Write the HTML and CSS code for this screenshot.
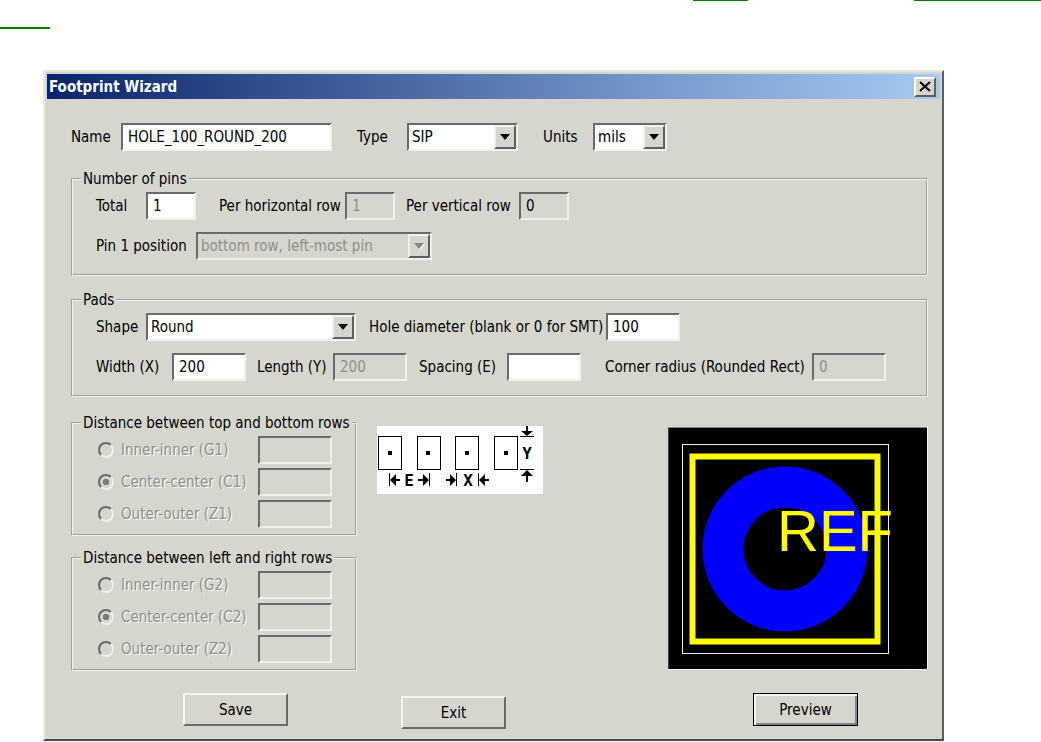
FILE: index.html
```
<!DOCTYPE html>
<html lang="en">
<head>
    <meta charset="UTF-8">
    <meta name="viewport" content="width=device-width, initial-scale=1.0">
    <title>Footprint Wizard</title>
    <link rel="stylesheet" href="styles.css">
</head>
<body>
    <nav class="links">
        <a class="link link-short" href="#part" aria-label="Part"></a>
        <a class="link link-long" href="#footprint" aria-label="Footprint"></a>
        <a class="link link-wrap" href="#footprint" aria-label="Footprint, continued"></a>
    </nav>

    <form class="dialog">
        <div class="title-bar">
            <h1>Footprint Wizard</h1>
            <button type="button" class="close" aria-label="Close">
                <svg width="12" height="11" viewBox="0 0 12 11"><path d="M1 1L11 10M11 1L1 10" stroke="#000" stroke-width="2"/></svg>
            </button>
        </div>

        <div class="content">
            <div class="row row-name">
                <div class="field">
                    <label class="label-50" for="name">Name</label>
                    <input class="input-name" type="text" id="name" value="HOLE_100_ROUND_200">
                </div>
                <div class="field">
                    <label class="label-50" for="type">Type</label>
                    <div class="select select-type">
                        <select id="type"><option>SIP</option></select>
                    </div>
                </div>
                <div class="field">
                    <label class="label-50" for="units">Units</label>
                    <div class="select select-units">
                        <select id="units"><option>mils</option></select>
                    </div>
                </div>
            </div>

            <fieldset class="group">
                <legend>Number of pins</legend>
                <div class="row row-pins">
                    <div class="field">
                        <label class="label-50" for="total">Total</label>
                        <input class="input-small" type="text" id="total" value="1">
                    </div>
                    <div class="field">
                        <label class="label-126" for="per-h">Per horizontal row</label>
                        <input class="input-small" type="text" id="per-h" value="1" disabled>
                    </div>
                    <div class="field">
                        <label class="label-113" for="per-v">Per vertical row</label>
                        <input class="input-small input-readonly" type="text" id="per-v" value="0" readonly>
                    </div>
                </div>
                <div class="row">
                    <div class="field">
                        <label class="label-100" for="pin1">Pin 1 position</label>
                        <div class="select select-pin">
                            <select id="pin1" disabled><option>bottom row, left-most pin</option></select>
                        </div>
                    </div>
                </div>
            </fieldset>

            <fieldset class="group">
                <legend>Pads</legend>
                <div class="row row-shape">
                    <div class="field">
                        <label class="label-50" for="shape">Shape</label>
                        <div class="select select-shape">
                            <select id="shape"><option>Round</option></select>
                        </div>
                    </div>
                    <div class="field">
                        <label class="label-237" for="hole">Hole diameter (blank or 0 for SMT)</label>
                        <input class="input-medium" type="text" id="hole" value="100">
                    </div>
                </div>
                <div class="row row-size">
                    <div class="field">
                        <label class="label-76" for="width">Width (X)</label>
                        <input class="input-medium" type="text" id="width" value="200">
                    </div>
                    <div class="field">
                        <label class="label-76" for="length">Length (Y)</label>
                        <input class="input-medium" type="text" id="length" value="200" disabled>
                    </div>
                    <div class="field">
                        <label class="label-88" for="spacing">Spacing (E)</label>
                        <input class="input-medium" type="text" id="spacing">
                    </div>
                    <div class="field">
                        <label class="label-207" for="radius">Corner radius (Rounded Rect)</label>
                        <input class="input-medium" type="text" id="radius" value="0" disabled>
                    </div>
                </div>
            </fieldset>

            <div class="lower">
                <div class="distances">
                    <fieldset class="group distance">
                        <legend>Distance between top and bottom rows</legend>
                        <div class="option">
                            <input type="radio" name="dist1" id="g1" disabled>
                            <label for="g1">Inner-inner (G1)</label>
                            <input class="input-medium" type="text" aria-label="G1" disabled>
                        </div>
                        <div class="option">
                            <input type="radio" name="dist1" id="c1" checked disabled>
                            <label for="c1">Center-center (C1)</label>
                            <input class="input-medium" type="text" aria-label="C1" disabled>
                        </div>
                        <div class="option">
                            <input type="radio" name="dist1" id="z1" disabled>
                            <label for="z1">Outer-outer (Z1)</label>
                            <input class="input-medium" type="text" aria-label="Z1" disabled>
                        </div>
                    </fieldset>
                    <fieldset class="group distance">
                        <legend>Distance between left and right rows</legend>
                        <div class="option">
                            <input type="radio" name="dist2" id="g2" disabled>
                            <label for="g2">Inner-inner (G2)</label>
                            <input class="input-medium" type="text" aria-label="G2" disabled>
                        </div>
                        <div class="option">
                            <input type="radio" name="dist2" id="c2" checked disabled>
                            <label for="c2">Center-center (C2)</label>
                            <input class="input-medium" type="text" aria-label="C2" disabled>
                        </div>
                        <div class="option">
                            <input type="radio" name="dist2" id="z2" disabled>
                            <label for="z2">Outer-outer (Z2)</label>
                            <input class="input-medium" type="text" aria-label="Z2" disabled>
                        </div>
                    </fieldset>
                </div>

                <!-- SIP dimensions: E = spacing, X = width, Y = length -->
                <svg class="diagram" width="166" height="68" viewBox="0 0 166 68">
                    <g fill="none" stroke="#000" stroke-width="1">
                        <rect x="1.5" y="10.5" width="23" height="33"/>
                        <rect x="40.5" y="10.5" width="23" height="33"/>
                        <rect x="78.5" y="10.5" width="23" height="33"/>
                        <rect x="117.5" y="10.5" width="23" height="33"/>
                        <path d="M12.5 47V60M52.5 47V60M79.5 47V60M101.5 47V60M143 10.5H157M143 43.5H157"/>
                    </g>
                    <g fill="#000">
                        <rect x="11" y="25" width="4" height="4"/>
                        <rect x="49" y="25" width="4" height="4"/>
                        <rect x="88" y="25" width="4" height="4"/>
                        <rect x="127" y="25" width="4" height="4"/>
                        <path d="M13 54L19 48V53H23V55H19V60Z"/>
                        <path d="M52 54L46 48V53H41V55H46V60Z"/>
                        <path d="M79 54L73 48V53H69V55H73V60Z"/>
                        <path d="M102 54L108 48V53H112V55H108V60Z"/>
                        <path d="M150 10L144 5H149V0H151V5H156Z"/>
                        <path d="M150 44L144 50H149V56H151V50H156Z"/>
                    </g>
                    <text x="32" y="60" text-anchor="middle">E</text>
                    <text x="91" y="60" text-anchor="middle">X</text>
                    <text x="150" y="33" text-anchor="middle">Y</text>
                </svg>

                <svg class="preview" width="260" height="243" viewBox="0 0 260 243">
                    <rect width="260" height="243" fill="#000"/>
                    <circle cx="117" cy="122" r="62" fill="none" stroke="#00f" stroke-width="41"/>
                    <rect x="24.500" y="29.500" width="185" height="185" fill="none" stroke="#ff0" stroke-width="6"/>
                    <text x="109" y="124">REF</text>
                    <rect x="14.500" y="17.500" width="206" height="209" fill="none" stroke="#eee"/>
                    <path d="M0 242.500V0.500H260" fill="none" stroke="#848482"/>
                    <path d="M0 242.500H259.500V0" fill="none" stroke="#f6f6f2"/>
                </svg>
            </div>

            <div class="buttons">
                <button type="button" class="btn">Save</button>
                <button type="button" class="btn btn-exit">Exit</button>
                <button type="submit" class="btn btn-default">Preview</button>
            </div>
        </div>
    </form>
</body>
</html>
```
FILE: styles.css
```
*,
*::before,
*::after {
    box-sizing: border-box;
}
body {
    margin: 0;
    background: #fff;
    color: #000;
    font-family: "DejaVu Sans Condensed", Tahoma, "DejaVu Sans", sans-serif;
    font-size: 15px;
    line-height: 18px;
}
.links {
    display: flex;
    flex-wrap: wrap;
    justify-content: flex-end;
    row-gap: 26px;
    height: 70px;
    align-content: flex-start;
}
.link {
    height: 1px;
    background: #008000;
}
.link-short {
    width: 55px;
    margin-right: 166px;
}
.link-long {
    width: 127px;
}
.link-wrap {
    width: 50px;
    height: 2px;
    margin-right: calc(100% - 50px);
}

/* Dialog window */
.dialog {
    margin: 0 97px 0 43px;
    padding: 2px;
    background: #d6d6ce;
    border: 2px solid;
    border-color: #e9e9e4 #5e5e5e #484848 #e9e9e4;
}
.title-bar {
    display: flex;
    align-items: center;
    justify-content: space-between;
    height: 25px;
    padding: 0 4px 0 2px;
    background: linear-gradient(to right, #0a246a, #7a9ccf 70%, #a6caf0);
}
h1 {
    margin: 0;
    font-size: 15px;
    line-height: 24px;
    color: #fff;
}
.close {
    display: flex;
    align-items: center;
    justify-content: center;
    width: 22px;
    height: 20px;
    padding: 0;
    background: #d6d6ce;
    border: 2px solid;
    border-color: #fff #5e5e5e #5e5e5e #fff;
}
.content {
    padding: 24px 12px 8px 24px;
}

/* Form rows */
.row {
    display: grid;
    align-items: center;
    min-height: 28px;
}
.row-name {
    grid-template-columns: 286px 186px auto;
}
.row-pins {
    grid-template-columns: 123px 187px auto;
}
.row-shape {
    grid-template-columns: 273px auto;
}
.row-size {
    grid-template-columns: 161px 162px 186px auto;
}
.row + .row {
    margin-top: 12px;
}
.field {
    display: flex;
    align-items: center;
    white-space: nowrap;
}
.label-50 { width: 50px; }
.label-76 { width: 76px; }
.label-88 { width: 88px; }
.label-100 { width: 100px; }
.label-113 { width: 113px; }
.label-126 { width: 126px; }
.label-207 { width: 207px; }
.label-237 { width: 237px; }

input[type="text"],
.select {
    height: 28px;
    background: #fff;
    border: 2px solid;
    border-color: #6a6a68 #f0f0ec #f0f0ec #6a6a68;
}
input[type="text"] {
    padding: 0 5px;
    font: inherit;
    color: #000;
}
input[type="text"]:disabled,
.input-readonly[type="text"] {
    background: #d6d6ce;
}
input[type="text"]:disabled {
    color: #8e8e8a;
}
.input-name { width: 211px; }
.input-small { width: 50px; }
.input-medium { width: 74px; }

.select {
    position: relative;
}
.select select {
    width: 100%;
    height: 100%;
    padding: 0 24px 0 3px;
    appearance: none;
    background: #fff;
    border: 0;
    border-radius: 0;
    font: inherit;
    color: #000;
}
.select select:disabled {
    background: #d6d6ce;
    color: #8e8e8a;
    opacity: 1;
}
.select::before {
    content: "";
    position: absolute;
    top: 0;
    right: 0;
    width: 22px;
    height: 24px;
    background: #d6d6ce;
    border: 2px solid;
    border-color: #f0f0ec #5e5e5e #5e5e5e #f0f0ec;
    pointer-events: none;
}
.select::after {
    content: "";
    position: absolute;
    top: 9px;
    right: 6px;
    border: 5px solid transparent;
    border-top: 6px solid #000;
    border-bottom: 0;
    pointer-events: none;
}
.select:has(select:disabled)::after {
    border-top-color: #848482;
    filter: drop-shadow(1px 1px #fff);
}
.select-type { width: 111px; }
.select-units { width: 74px; }
.select-pin { width: 236px; }
.select-shape { width: 210px; }

/* Group boxes */
.group {
    min-width: 0;
    margin: 15px 0 0;
    padding: 4px 23px 14px;
    border: 2px groove #f2f2ee;
}
.row-name + .group {
    margin-top: 19px;
}
legend {
    margin-left: -15px;
    padding: 0 2px;
    white-space: nowrap;
}

/* Distances and pictures */
.lower {
    display: flex;
    align-items: flex-start;
}
.distances {
    width: 286px;
}
.distance {
    display: grid;
    gap: 4px;
    margin-top: 17px;
    padding-right: 2px;
    padding-bottom: 6px;
}
.distance + .distance {
    margin-top: 13px;
}
.option {
    display: grid;
    grid-template-columns: 25px 137px 74px;
    align-items: center;
    white-space: nowrap;
}
.option label {
    color: #8e8e8a;
    text-shadow: 1px 1px #fff;
}
input[type="radio"] {
    appearance: none;
    width: 16px;
    height: 16px;
    margin: 0 0 0 2px;
    border: 2px solid;
    border-color: #6a6a68 #f0f0ec #f0f0ec #6a6a68;
    border-radius: 50%;
}
input[type="radio"]:checked {
    background: radial-gradient(#7a7a78 3px, transparent 3px);
}
.diagram {
    margin: 29px 0 0 20px;
    background: #fff;
}
.diagram text {
    font-family: "DejaVu Sans Mono", monospace;
    font-size: 16px;
    font-weight: bold;
}
.preview {
    margin: 30px 0 0 auto;
}
.preview text {
    font-family: "Liberation Sans", Arial, sans-serif;
    font-size: 58px;
    fill: #ff0;
}

/* Buttons */
.buttons {
    display: flex;
    align-items: flex-start;
    margin-top: 22px;
    padding: 0 70px 0 112px;
}
.btn {
    width: 105px;
    height: 33px;
    padding: 0;
    background: #d6d6ce;
    border: 2px solid;
    border-color: #f4f4f0 #6a6a68 #6a6a68 #f4f4f0;
    font: inherit;
    color: #000;
}
.btn-exit {
    margin: 3px 0 0 113px;
}
.btn-default {
    margin-left: auto;
    border: 1px solid #000;
    box-shadow: inset 2px 2px #f4f4f0, inset -2px -2px #848482;
}
```
